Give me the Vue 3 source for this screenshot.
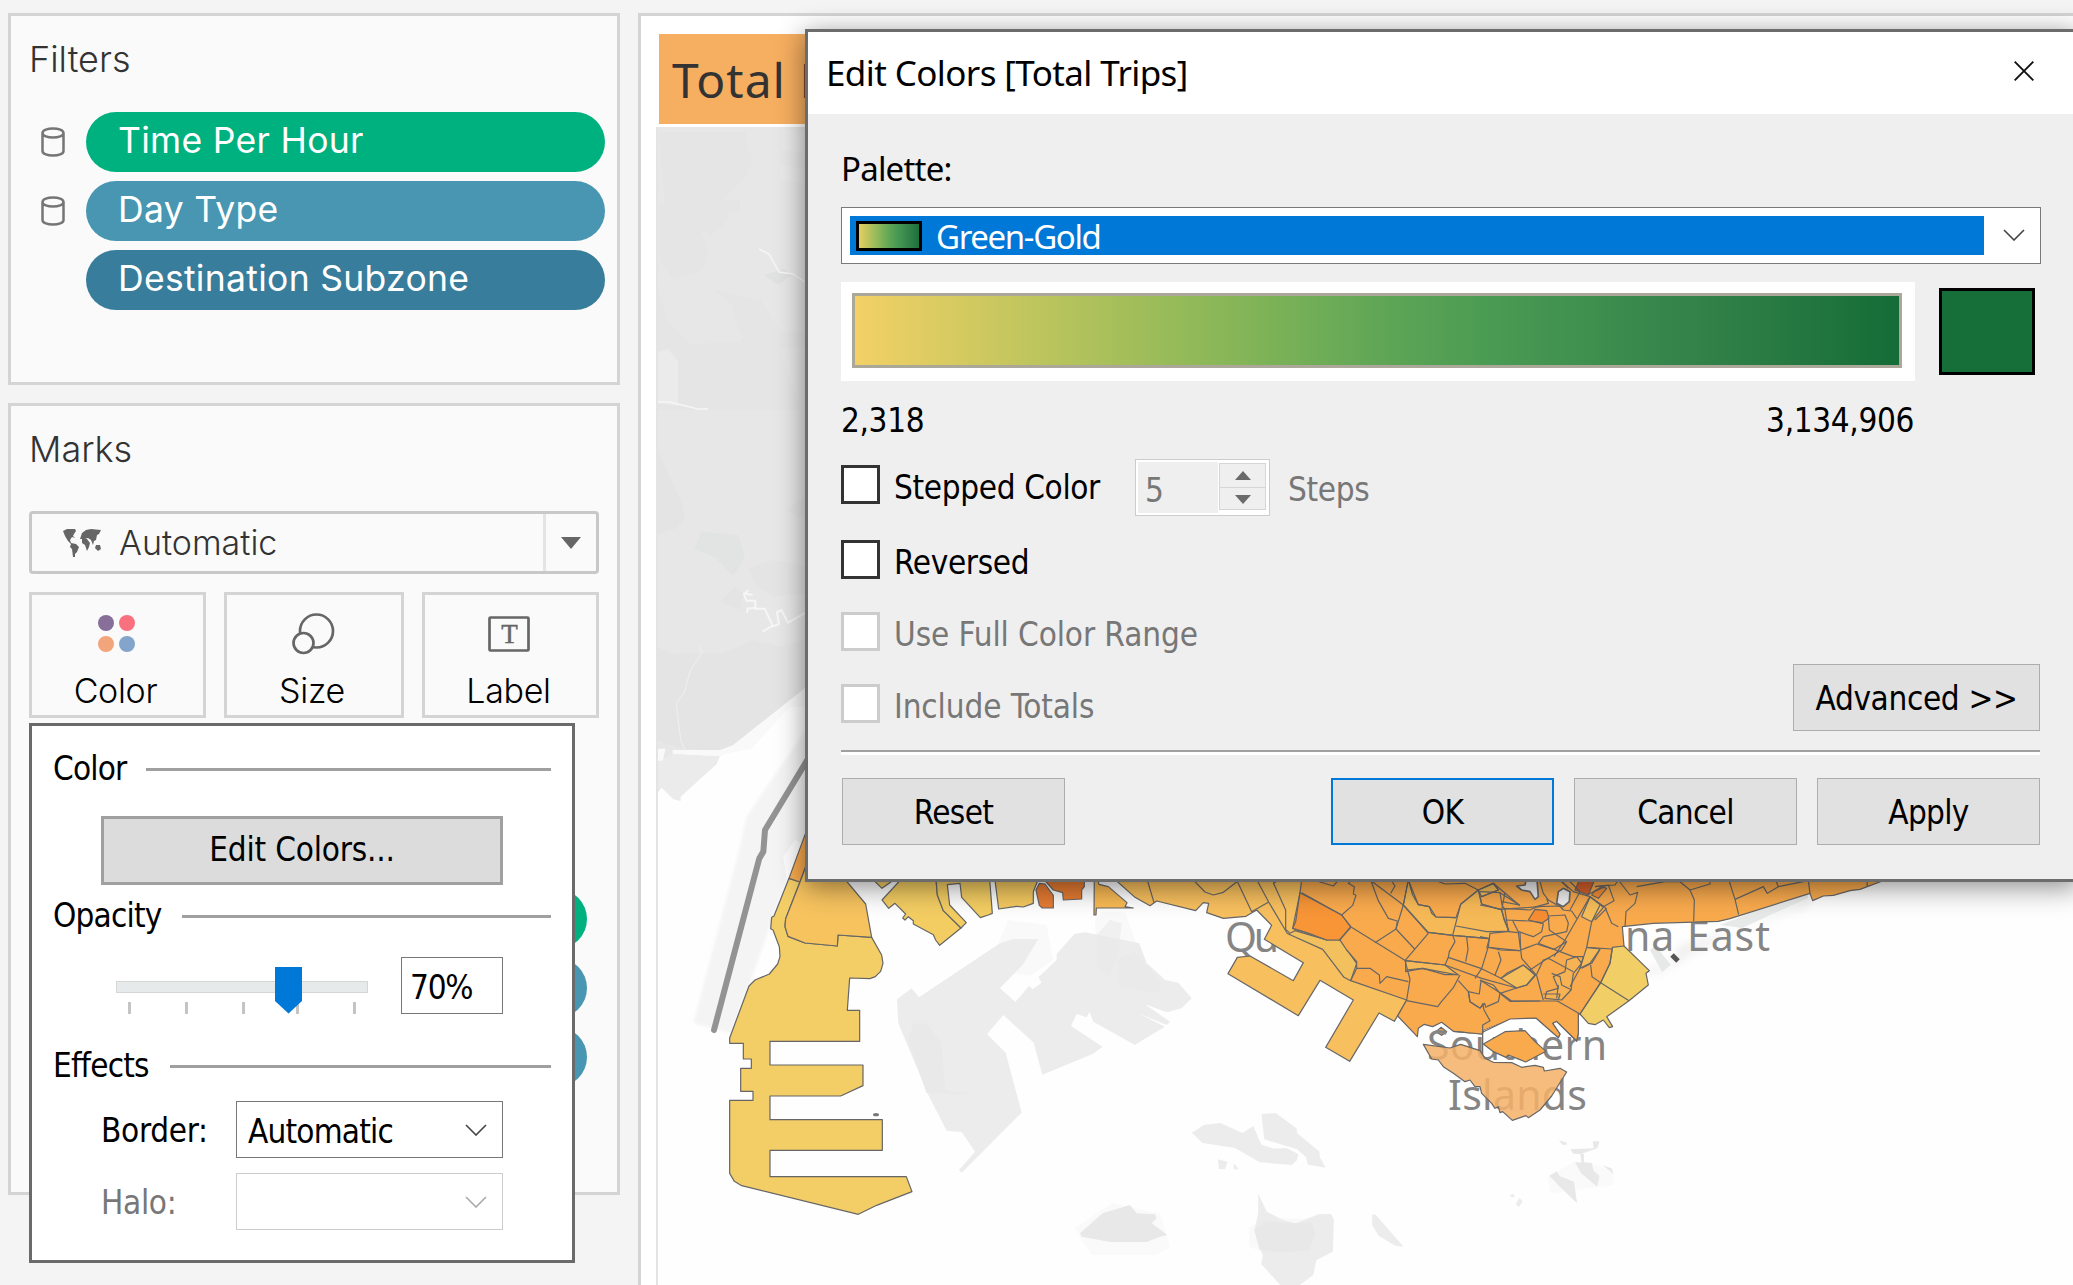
<script setup>
import { ref } from 'vue'

const filters = [
  { name: 'Time Per Hour', tone: 'green', context: true },
  { name: 'Day Type', tone: 'blue', context: true },
  { name: 'Destination Subzone', tone: 'deep', context: false },
]
const ticks = [128, 185, 242, 296, 353]
const steps = ref(5)
const opacity = ref('70%')

const checks = [
  { name: 'Stepped Color', cls: 'stepped', off: false },
  { name: 'Reversed', cls: 'reversed', off: false },
  { name: 'Use Full Color Range', cls: 'full', off: true },
  { name: 'Include Totals', cls: 'totals', off: true },
]

// Subzone borders of the central region
const westLines = [
  '22,60 42,128', '155,55 195,96 220,105 250,97 290,66', '290,60 335,155 386,126', '348,55 386,126 443,222',
  '400,68 437,150 437,208 448,218', '400,70 425,55', '485,98 605,165 632,200 797,302', '520,60 580,78 600,55',
  '640,55 625,70 643,80 640,102 648,106 638,136 605,165', '690,55 715,122 745,175 772,183 768,207 705,248',
  '690,60 790,135 865,220', '750,55 765,78 752,100', '805,60 790,135 768,207 824,267', '805,60 818,105 835,134 868,140 875,160 888,171 948,173',
  '598,240 632,203', '865,220 795,302', '865,217 940,226 1048,236', '795,302 915,315 1025,355 1130,384',
  '797,330 848,325 915,344 950,344', '795,302 810,358 800,420', '650,325 690,325 718,345 720,370 740,350 805,365',
  '800,422 893,440 905,424 940,383 960,345', '915,315 925,292 1025,326 1083,355', '948,198 1040,215 1107,214',
  '1015,90 962,133 938,226 945,245 928,275 925,292', '980,230 984,268 977,305', '1048,236 1045,260 1025,326 1005,355',
  '1045,262 1138,272', '1075,275 1083,300 1065,345', '1015,88 1025,132 1080,148 1200,140', '870,55 915,72 975,70 1015,90 1060,70 1075,90 1025,110',
  '1095,98 1085,150 1093,180 1107,215', '1060,70 1140,137', '955,362 985,395 990,425 1020,445 1034,430 1050,482 1028,495 1028,580',
  '985,395 1018,402 1023,362 1060,375 1080,400 1075,425 1040,440', '1080,400 1110,424 1200,423', '1083,355 1100,340 1150,315 1185,345 1160,375 1130,384 1080,400',
]
const eastLines = [
  '66,135 75,150 85,215', '70,145 150,150 170,140 205,130 200,115', '75,180 150,183 180,187 190,192 185,215 160,230 115,215 97,180',
  '0,230 28,236 20,265', '28,262 62,270 120,272', '120,215 122,270 125,295 170,347', '85,215 115,218 122,270 170,252 222,268 260,245',
  '205,170 208,210 260,245 245,270 195,300 150,330', '165,140 240,138 250,150 275,153 290,175', '205,168 255,165 265,190 260,215 190,230',
  '180,65 190,100 205,120 240,140', '240,60 280,95 330,110 375,142 395,190 415,200', '265,60 300,95 270,150', '330,110 255,240 222,290',
  '360,135 335,185 320,262 395,267', '345,80 385,75 402,122 370,140', '320,105 375,80', '345,180 380,145', '190,230 175,250 222,268 280,290 310,290 300,325 270,380',
  '170,347 190,420', '168,347 190,300 205,295 280,335', '215,340 240,350 245,375 275,390', '235,375 230,415', '190,402 240,402 235,420',
  '305,325 335,310 360,268', '332,315 336,350 362,368', '397,265 390,310 362,368 300,462', '95,423 232,423 300,462',
  '415,60 450,105 473,97 465,130 438,155 435,200', '470,80 555,65 600,65 630,90 643,120 641,184', '630,90 690,72 690,55',
  '745,55 765,118 776,164', '765,118 850,80 862,100 895,80 985,62', '885,55 895,80', '985,62 990,100', '1160,55 1162,78',
  '415,60 405,75 345,80', '200,60 240,60 265,85', '0,360 60,398 95,423', '0,95 60,98 66,135', '0,135 66,148', '60,98 118,135 66,125',
]
</script>

<template>
  <div class="workspace">
    <aside class="sidebar">
      <section class="card filters">
        <h2>Filters</h2>
        <div v-for="f in filters" :key="f.name" class="filter-row">
          <svg v-if="f.context" class="cyl" viewBox="0 0 24 30">
            <path d="M1.5 6v18c0 6 21 6 21 0V6M1.5 6c0-6 21-6 21 0s-21 6-21 0" />
          </svg>
          <span v-else class="cyl"></span>
          <span class="pill" :class="f.tone">{{ f.name }}</span>
        </div>
      </section>

      <section class="card marks">
        <h2>Marks</h2>
        <div class="mark-type">
          <svg class="world" viewBox="0 0 38 28">
            <path d="M0 2l4-2 8 0 1 2-2 3-1 2 2 2-3-1-2 3 1 3 5 1 3 3-2 5-2 2v5l-2-2-1-8-2-2 1-3-3-3-3-5zM19 4l4-3 5-1 10 1-2 4-2 1-1 5-2 1-1 4-2-5-3-2-3 1-5 0zM19 10l5 0 3 4-1 4-2 4-2-6-3-2zM33 16l4 0 1 4-3 2-3-3z" />
          </svg>
          <span>Automatic</span>
          <i class="drop"></i>
        </div>
        <div class="mark-cards">
          <div class="mark">
            <svg viewBox="0 0 60 50">
              <circle cx="19" cy="18" r="8" fill="#876f99" /><circle cx="40" cy="18" r="8" fill="#f9707f" />
              <circle cx="19" cy="39" r="8" fill="#f2a47b" /><circle cx="40" cy="39" r="8" fill="#83a4cb" />
            </svg>
            <span>Color</span>
          </div>
          <div class="mark wide">
            <svg viewBox="0 0 60 50" fill="#fafafa" stroke="#666" stroke-width="2.700">
              <circle cx="33.500" cy="26" r="16.500" /><circle cx="20.500" cy="38" r="10" />
            </svg>
            <span>Size</span>
          </div>
          <div class="mark">
            <svg viewBox="0 0 60 50" fill="none" stroke="#666" stroke-width="2.700">
              <rect x="9.500" y="12.500" width="39" height="33" rx="1" />
              <text x="29.500" y="38" text-anchor="middle" class="serif-t">T</text>
            </svg>
            <span>Label</span>
          </div>
        </div>
        <div class="shelf">
          <span class="pill green"></span>
          <span class="pill blue"></span>
          <span class="pill blue"></span>
        </div>
      </section>
    </aside>

    <main class="view">
      <div class="view-title">Total E</div>
      <svg class="map" viewBox="656 127 1417 1158" width="1417" height="1158">
        <defs>
          <filter id="soft"><feGaussianBlur stdDeviation="5" /></filter>
        </defs>
        <rect x="656" y="127" width="1417" height="1158" fill="#fefefe" />
        <!-- mainland -->
        <path d="M656 127H830V670L733 745 720 756 690 753 656 765Z" fill="#e7e7e7" />
        <g transform="translate(640 480) scale(.33333)">
          <path d="M48 845L98 822 240 828 230 852 122 950 122 963 100 958 65 923 48 945Z" fill="#ebebeb" />
          <path d="M48 500L100 522 250 520 340 480 420 500 500 480V620L280 795 245 812 130 808 48 780Z" fill="#e4e4e4" />
          <path d="M500 620L280 795 240 825 335 806 450 680 500 680Z" fill="#f9f9f9" />
          <path d="M185 155L295 165 315 232 280 287 222 230 163 208Z" fill="#e1e4e3" />
          <path d="M48 -100L130 80 135 120 110 145 48 165ZM325 265L400 240 500 260V340L400 350 350 320ZM240 365L285 320 310 340 300 390ZM435 90L500 50V120Z" fill="#e4e4e4" />
          <path d="M325 330l-13 14 8 18h26v24h28l25 53 18-7-6-35 13-7 20 38 60-34M310 340l28 5M322 398v-12l22-3M368 455l30-18" fill="none" stroke="#f6f6f6" stroke-width="6" />
          <path d="M178 500l7 20-34 50-18 68-24 32 13 110 12 27" fill="none" stroke="#f0f0f0" stroke-width="3" />
          <path d="M98 810H240L280 795 240 828 98 822ZM54 806H77L68 842H54Z" fill="#f9f9f9" />
        </g>
        <g fill="#e3e3e3">
          <path d="M659 132h86l6 30-6 15-22 22 6 20-11 10-8 7-45-30zM700 200h40v12l-40-3zM659 205l36 10 13 35-6 20-28 10-15-20zM715 290l45 10 20 30-30 20-10-20-8-25zM658 292l10 30 22 22 50-2 10-14 55 5v12l-25 5 20 60H658z" opacity=".5" />
          <path d="M781 128l24 5v20l-24-3zM780 165l25 4v15l-25-4z" fill="#e9e9e9" />
          <path d="M764 275l20-6 8 6-14 10z" fill="#dfe2e1" />
          <path d="M658 352l10-3 10 12v45l-20-3z" fill="#ebebeb" />
        </g>
        <path d="M759 249l10 5 10 18 14 2 12 8M658 402h12l28 7h10" fill="none" stroke="#f6f6f6" stroke-width="1.500" />

        <!-- islands and causeway -->
        <g transform="translate(640 780) scale(.33333)">
          <path d="M160 730L300 200 320 110 400 -10 505 -160V150L445 290 390 440 330 610 275 760Z" fill="#f4f4f4" filter="url(#soft)" />
          <path d="M430 230L465 180 483 190 440 300Z" fill="#fdfdfd" />
          <path d="M520 -90L375 150 370 215 358 235 222 750" fill="none" stroke="#939393" stroke-width="18" stroke-linecap="round" stroke-linejoin="round" />
          <path d="M1075 490L1105 420 1220 435 1240 540 1170 588 1085 575ZM1365 420L1385 395 1455 395 1500 520 1410 590 1372 560Z" fill="#f9f9f9" />
          <path d="M771 658L815 625 837 652 1080 490 1120 477H1195L1150 552 1080 625 1126 666 1167 618 1178 628 1205 608 1195 592 1250 540V522L1303 462 1335 457 1440 478 1498 490 1520 550 1560 585 1575 600 1615 608 1655 655 1625 685 1580 697 1515 673 1590 725 1580 735 1495 700 1575 740 1500 785 1485 795 1360 725 1348 695 1340 712 1310 702 1293 738 1388 800 1358 822 1207 884 1181 788 1090 705 1041 762 1097 818 1145 998 965 1178 957 1170 1005 1115 965 1056 920 1052 865 945 775 730Z" fill="#ececec" />
          <path d="M820 730H858L903 785 917 930 1000 942 860 940 805 780Z" fill="#e9e9e9" />
          <path d="M1370 465L1410 420 1445 430 1435 520 1410 590 1370 560ZM1430 540L1485 515 1560 600V640L1440 620Z" fill="#e9e9e9" opacity=".6" />
          <path d="M1303 1345L1415 1270 1560 1300 1590 1400 1550 1425H1355Z" fill="#fafafa" />
          <path d="M1320 1360L1388 1300 1470 1275 1490 1300 1545 1303 1550 1315 1535 1330 1582 1365 1560 1370 1520 1386 1410 1386 1325 1370Z" fill="#e8e8e8" />
          <ellipse cx="708" cy="1004" rx="9" ry="5" fill="#777" />
        </g>
        <g transform="translate(1140 1080) scale(.35714 .33333)" fill="#ececec">
          <path d="M145 158L180 134 225 129 287 159 317 138 340 194 375 206 410 204 443 222 440 240 425 255 335 247 266 204 175 189ZM340 102L380 99 438 145 440 160 503 215 503 230 520 263 470 254 465 232 440 208 348 178ZM218 238L245 245 238 268 221 267ZM262 250L277 268 263 268Z" />
          <path d="M306 440L370 414 465 416 490 460 475 515 370 525 306 500Z" fill="#f9f9f9" />
          <path d="M331 341L355 395 400 420 435 430 500 403 535 402 543 420 540 515 494 540 485 585 448 615H393L339 552 344 528 320 452 331 400Z" />
          <path d="M350 424L435 430 480 425 490 460 475 510 390 518 335 510 320 450Z" fill="#e8e8e8" />
          <path d="M650 404H660L738 500 715 497 668 467 650 435ZM1036 345l8-3 6 6-8 5zM1062 354l10 10-11 17-9-8z" />
          <path d="M1142 290L1215 245 1265 250 1325 275V315L1150 340Z" fill="#fafafa" />
          <path d="M1146 287L1167 274 1175 288 1215 305 1224 370 1180 325ZM1218 247L1236 248 1233 222H1243V247L1265 249 1270 272 1287 288 1280 320 1235 280ZM1295 256L1320 265 1327 282ZM1205 208L1270 205 1268 184H1287L1280 205 1235 222 1213 221ZM1173 181L1195 188V194H1183Z" fill="#e8e8e8" />
        </g>

        <path d="M1635 975L1655 967 1675 965 1690 955 1800 900 1810 896 1810 905 1740 930 1680 945 1665 970 1660 973Z" fill="#efefef" filter="url(#soft)" />
        <path d="M1720 925L1808 890V898L1742 928ZM1650 950L1662 972 1671 965 1655 945Z" fill="#e7e9e8" />
        <path d="M1672 955L1678 961" stroke="#555" stroke-width="5" />
        <g class="places">
          <text x="1225" y="952" textLength="54" lengthAdjust="spacing">Qu</text>
          <text x="1625" y="951" textLength="145" lengthAdjust="spacing">na East</text>
          <text x="1448" y="1110" textLength="139" lengthAdjust="spacing">Islands</text>
        </g>

        <!-- western subzones -->
        <g class="zones" transform="translate(640 780) scale(.33333)">
          <path fill="#f3cd66" d="M447 295L402 408 395 412 392 446 399 450 418 500 420 530 413 552 388 582 345 600 327 618 269 774V790H310V837H334V865H302V934H339V961H269V1180L283 1204 305 1217 655 1303 710 1276 816 1235 799 1190H390V1111H727V1019H390V948H602L669 917V855H390V784H659V691H622L629 594 690 596 706 590 722 574 729 550 725 525 695 472 594 465 592 498 495 489 444 469 435 440 437 416 480 306Z" />
          <path fill="#f7a94d" d="M515 110L447 295 480 306 515 210Z" />
          <path fill="#f7c35f" d="M505 240L480 306 437 416 435 440 444 469 495 489 592 498 594 465 695 472 677 372 600 280Z" />
          <path fill="#f3cd62" d="M680 280L726 325 790 280Z" />
          <path fill="#f3cd62" d="M800 280L726 360 746 385 765 370 797 402 788 414 795 420 805 410 820 422 820 432 880 464 887 480 899 496 963 444 910 392 892 345 887 285Z" />
          <path fill="#f3cd62" d="M887 285L892 345 910 392 963 444 979 428 929 375 922 314 960 310 965 352 1021 413 1045 405 1057 400 1048 285Z" />
          <path fill="#f3c85f" d="M1063 285L1076 387 1130 379 1150 381 1180 370V335L1190 310 1200 285Z" />
          <path fill="#e57b32" d="M1188 330L1198 310 1215 312 1240 346V384H1207L1198 376ZM1200 285L1240 330 1268 338 1270 360 1325 357V330L1333 320V285Z" />
          <path fill="#f8b954" d="M1363 285L1362 405H1368L1369 384H1480L1455 380 1461 368 1405 320 1377 313 1370 285Z" />
        </g>

        <!-- central subzones -->
        <g class="zones" transform="translate(1140 860) scale(.33333)">
          <path fill="#f7bf5e" d="M-90 45L-15 112 30 137 50 123 167 152 190 128 206 130 200 158 250 175 318 169 350 150 395 196 373 238 490 308 460 362 330 288 292 292 264 341 475 467 540 361 640 420 557 562 629 604 717 459 763 484 800 420 650 310 600 40Z" />
          <path fill="#f2c05c" d="M445 222L465 212 560 240 600 240 650 310 632 362 612 352 548 268Z" />
          <path fill="#f9aa4d" d="M487 45L480 98 458 205 500 218 560 240 568 234 600 240 620 270 650 305 650 325 632 362 800 420 773 468 832 530 835 505 853 493 878 500 905 487 940 514 1025 522 1030 510 1110 477 1188 474 1255 533 1260 522 1238 490 1250 484 1310 543 1315 520V462L1320 462 1400 400 1452 258 1447 200 1540 190 1735 184 1770 176 2010 100 2018 122 2050 108 2080 106 2130 92 2160 88 2235 60V45Z" />
          <path fill="#f79537" d="M480 98L605 165 632 200 600 240 560 240 500 218 458 205 467 185Z" />
          <path fill="#f6b957" d="M805 60L790 135 865 217 938 226 1048 236 1050 220 1107 214 1093 180 1085 150 1025 132 1015 90 962 133 948 173 888 171 868 140 835 134Z" />
          <path fill="#f6b957" d="M797 302L915 315 955 345 848 325 797 335Z" />
          <path fill="#f6be5a" d="M1083 355L1150 315 1187 345 1160 375 1130 384ZM1015 90L1060 70 1075 90 1025 110Z" />
          <path fill="#f68d32" d="M1165 180L1185 148 1220 152 1227 175 1205 190Z" />
          <path fill="#d6602b" d="M1325 45L1305 90 1345 105 1370 45Z" />
          <path fill="#f68d32" d="M1355 105L1365 92 1385 80 1400 85 1375 115Z" />
          <path fill="#f6be5a" d="M1325 170L1350 110 1390 142 1355 185Z" />
          <path fill="#f7b353" d="M1240 350L1275 335 1280 300 1310 290 1325 310 1300 340 1293 390 1265 420 1215 415 1220 395 1255 385Z" />
          <path fill="#f6b957" d="M1320 325L1340 262 1380 267 1350 310Z" />
          <path fill="#eee" stroke-width="5" d="M1160 52L1155 75 1130 78 1145 90 1170 95 1185 118 1195 110 1190 45ZM1255 95L1270 85 1290 95 1288 125 1270 140 1250 130Z" />
          <polyline v-for="(l, i) in westLines" :key="i" :points="l" />
          <path fill="#f9aa4d" d="M888 515L903 502 920 515 905 526Z" />
          <path fill="#fff" d="M1028 522L1110 477H1188L1250 540 1220 580 1200 620 1140 622 1050 605 1028 585Z" stroke="none" />
        </g>
        <g class="zones" transform="translate(1480 860) scale(.33333)">
          <path fill="#f2ce67" d="M397 262L432 258 508 332 498 340 505 375 447 422 380 470 398 500 388 503 370 480 345 494 325 490 300 462 362 368 390 310Z" />
          <polyline points="362,368 447,422" />
          <polyline v-for="(l, i) in eastLines" :key="i" :points="l" />
        </g>
        <g class="places">
          <text x="1427" y="1060" textLength="180" lengthAdjust="spacing">Southern</text>
        </g>
        <g class="zones" transform="translate(1480 860) scale(.33333)">
          <path fill="#f9aa4d" d="M10 552L75 515 135 512 165 545 198 574 137 606 118 598 85 585 78 592 40 575Z" />
          <path fill="#f9aa4d" stroke="none" d="M-40 440L295 462 295 520 290 543 230 484 218 490 240 522 235 533 168 474 90 477 9 510 5 522-40 520Z" />
          <polyline points="-80,514 5,522 9,516 90,477 168,474 235,533 240,522 218,490 230,484 290,543 295,520 295,460" />
          <polyline points="8,430 12,450 30,482 8,495 8,590" />
          <polyline points="-35,395 -30,425 0,445 10,430" />
          <path fill="#f5b168" fill-opacity=".86" d="M-170 553L-90 564-58 553 0 572 15 595 40 607 95 608 125 622 165 616 190 622 193 633 240 625 260 636 215 708 180 750 145 773 138 767 97 781 68 755 60 758 55 740 45 745 35 730 5 700 0 680-15 680-30 660-45 665-80 640-110 620-125 600-145 597Z" />
        </g>
        <rect x="656" y="127" width="2" height="1158" fill="#e4e4e4" />
      </svg>
    </main>

    <div class="popup">
      <div class="group"><span class="g1">Color</span><hr /></div>
      <button class="edit"><span>Edit Colors...</span></button>
      <div class="group second"><span class="g2">Opacity</span><hr /></div>
      <div class="opacity-row">
        <svg class="slider" width="252" height="57" viewBox="116 957 252 57">
          <rect x="116.500" y="981.500" width="251" height="11" fill="#e7eaea" stroke="#d6d6d6" />
          <rect v-for="t in ticks" :key="t" :x="t" y="1002" width="3" height="12" fill="#c4c4c4" />
          <path d="M275 967H302V1001L288.500 1013.500 275 1001Z" fill="#0078d7" />
        </svg>
        <div class="num">{{ opacity }}</div>
      </div>
      <div class="group third"><span class="g3">Effects</span><hr /></div>
      <div class="field">
        <label>Border:</label>
        <div class="combo"><span>Automatic</span><svg viewBox="0 0 22 12"><path d="M1 1l10 10L21 1" /></svg></div>
      </div>
      <div class="field off">
        <label>Halo:</label>
        <div class="combo"><span></span><svg viewBox="0 0 22 12"><path d="M1 1l10 10L21 1" /></svg></div>
      </div>
    </div>

    <div class="dialog">
      <header>
        <span>Edit Colors [Total Trips]</span>
        <svg width="20" height="20" viewBox="0 0 20 20"><path d="M.7.700L19.300 19.300M19.300.700L.7 19.300" stroke="#111" stroke-width="1.900" /></svg>
      </header>
      <div class="body">
        <div class="plabel">Palette:</div>
        <div class="palette">
          <div class="chosen"><i class="mini ramp"></i><span>Green-Gold</span></div>
          <svg viewBox="0 0 22 12"><path d="M1 1l10 10L21 1" /></svg>
        </div>
        <div class="ramp-row">
          <div class="ramp-box"><div class="ramp"></div></div>
          <div class="swatch"></div>
        </div>
        <div class="range"><span>2,318</span><span>3,134,906</span></div>
        <div class="checks">
          <div v-for="c in checks" :key="c.name" class="check" :class="[c.cls, { off: c.off }]">
            <i></i><span>{{ c.name }}</span>
            <template v-if="c.cls === 'stepped'">
              <div class="spin">
                <b>{{ steps }}</b>
                <div class="arrows"><em><u class="up"></u></em><em><u class="down"></u></em></div>
              </div>
              <span class="steps">Steps</span>
            </template>
          </div>
          <button class="adv"><span>Advanced &gt;&gt;</span></button>
        </div>
        <div class="rule"></div>
        <div class="actions">
          <button class="reset"><span>Reset</span></button>
          <button class="ok"><span>OK</span></button>
          <button><span>Cancel</span></button>
          <button><span>Apply</span></button>
        </div>
      </div>
    </div>
  </div>
</template>

<style>
body { margin: 0; overflow: hidden; }
</style>

<style scoped>
* { box-sizing: border-box; }
.workspace {
  position: relative; display: flex; width: 2073px; height: 1285px; overflow: hidden;
  background: #f4f4f4; font-family: Inter, sans-serif; white-space: nowrap;
}
.sidebar { width: 638px; padding: 13px 18px 0 8px; display: flex; flex-direction: column; gap: 18px; flex: none; }
.card { border: 3px solid #d4d4d4; background: #fafafa; width: 612px; }
.filters { height: 372px; padding: 21px 12px 0 18px; }
.marks { height: 792px; padding: 21px 18px 0 18px; }
h2 { margin: 0; font-size: 36px; font-weight: 300; line-height: 44px; color: #333; }
.filters h2 { margin-bottom: 31px; }
.filter-row { display: flex; align-items: center; gap: 21px; padding-left: 12px; margin-bottom: 9px; }
.cyl { width: 24px; height: 30px; flex: none; fill: none; stroke: #757575; stroke-width: 2.5; }
.pill { width: 519px; height: 60px; border-radius: 30px; padding-left: 32px; color: #fff; font-size: 35.5px; line-height: 58px; letter-spacing: .3px; flex: none; }
.green { background: #00b180; }
.blue { background: #4996b2; }
.deep { background: #387d9c; }
.mark-type {
  display: flex; align-items: center; height: 63px; margin-top: 40px; border: 3px solid #c8c8c8; border-radius: 4px;
  padding-left: 31px; font-size: 34px; font-weight: 300; color: #333;
}
.world { width: 38px; height: 28px; fill: #666; margin-right: 18px; }
.drop { margin-left: auto; width: 53px; height: 57px; border-left: 3px solid #e4e4e4; display: flex; align-items: center; justify-content: center; }
.drop::after { content: ''; border: 10px solid transparent; border-top: 12px solid #666; border-bottom: 0; }
.mark-cards { display: flex; gap: 18px; margin-top: 18px; }
.mark { width: 177px; height: 126px; border: 3px solid #d4d4d4; display: flex; flex-direction: column; align-items: center; font-size: 34px; font-weight: 300; color: #000; }
.mark.wide { width: 180px; }
.mark svg { width: 60px; height: 50px; margin-top: 10px; margin-right: 2px; }
.mark span { line-height: 40px; margin-top: 16px; margin-right: 4px; letter-spacing: -.3px; }
.serif-t { font-family: "Liberation Serif", serif; font-size: 27px; fill: #666; stroke: #666; stroke-width: .5; }
.shelf { display: flex; flex-direction: column; gap: 9px; margin-top: 171px; width: 558px; align-items: flex-end; }

.view { flex: 1; border: solid #d4d4d4; border-width: 3px 0 0 3px; background: #fff; margin-top: 13px; padding: 18px 0 0 15px; min-width: 0; }
.view-title { height: 90px; margin-left: 3px; margin-bottom: 3px; background: #f6ae60; color: #333; font: 48px/92px "Noto Sans", sans-serif; padding-left: 13px; letter-spacing: 1px; }
.map { display: block; }
.places { font: 41px "Noto Sans", sans-serif; fill: #858585; }
.zones { stroke: #666; stroke-width: 3.6; stroke-linejoin: round; }
.zones polyline { fill: none; }

.popup {
  position: absolute; left: 29px; top: 723px; width: 546px; height: 540px; border: 3px solid #6a6a6a; background: #fff;
  padding: 22px 21px 0 21px; color: #000;
}
.popup, .body { font-family: "DejaVu Sans Condensed", "DejaVu Sans", sans-serif; font-stretch: condensed; font-size: 33px; letter-spacing: -.35px; }
.popup { letter-spacing: -.8px; }
.group { display: flex; align-items: center; height: 42px; }
.group span { line-height: 42px; flex: none; }
.group hr { flex: 1; border: 0; height: 3px; background: #a0a0a0; margin: 0; }
.g1 { width: 93px; } .g2 { width: 129px; } .g3 { width: 117px; }
button { font: inherit; letter-spacing: inherit; color: #000; padding: 0; }
.edit { display: block; width: 402px; height: 69px; margin: 26px 0 10px 48px; border: 3px solid #a0a0a0; background: #dcdcdc; letter-spacing: -.2px; padding: 0 0 2px; }
.opacity-row { display: flex; gap: 33px; margin: 20px 0 31px 63px; }
.num { width: 102px; height: 57px; border: 1px solid #777; padding-left: 8px; line-height: 59px; letter-spacing: -1.2px; }
.field { display: flex; align-items: center; height: 57px; margin: 15px 0 0 48px; }
.third + .field { margin-top: 14px; }
.field label { width: 135px; line-height: 57px; padding-top: 2px; letter-spacing: -.3px; }
.combo { width: 267px; height: 57px; border: 1px solid #777; display: flex; align-items: center; justify-content: space-between; padding: 3px 15px 0 11px; }
.combo svg, .palette svg { width: 22px; height: 12px; fill: none; stroke: #444; stroke-width: 1.6; margin-top: -2px; }
.off { color: #777; }
.field.off .combo { border-color: #ccc; }
.field.off svg { stroke: #aaa; }

.dialog {
  position: absolute; left: 805px; top: 29px; width: 1274px; height: 853px; border: 3px solid #6b6c6b; background: #efefef;
  box-shadow: 0 5px 26px rgba(0, 0, 0, .46);
}
.dialog header { display: flex; justify-content: space-between; height: 82px; background: #fff; padding: 29px 42px 0 18px; font: 35px/24px "Noto Sans", sans-serif; letter-spacing: -.6px; color: #000; }
.body { padding: 33px 0 0 33px; width: 1232px; color: #000; }
.plabel { height: 60px; line-height: 44px; font-family: "Noto Sans", sans-serif; font-size: 33px; letter-spacing: -.8px; }
.palette { display: flex; align-items: center; width: 1200px; height: 57px; border: 1px solid #7a7a7a; background: #fff; padding: 0 15px 0 8px; justify-content: space-between; }
.chosen { width: 1134px; height: 39px; background: #0078d7; color: #fff; display: flex; align-items: center; font-family: "Noto Sans", sans-serif; font-size: 33px; letter-spacing: -1.35px; line-height: 39px; padding-left: 6px; }
.chosen span { padding-top: 2px; }
.ramp { background: linear-gradient(90deg, #f4d166, #d5ca60, #b6c35c, #98bb59, #7cb257, #60a656, #4b9c53, #3f8f4f, #33834a, #257740, #146c36); }
.mini { width: 66px; height: 30px; border: 3px solid #000; background-origin: border-box; margin-right: 14px; }
.ramp-row { display: flex; gap: 24px; margin-top: 18px; height: 99px; }
.ramp-box { width: 1074px; background: #fff; padding: 11px 13px 13px 11px; }
.ramp-box .ramp { height: 75px; border: 3px solid #aca899; background-origin: border-box; }
.swatch { width: 96px; height: 87px; margin-top: 6px; border: 3px solid #000; background: #166f39; }
.range { display: flex; justify-content: space-between; width: 1073px; height: 78px; line-height: 78px; padding-top: 1px; }
.checks { position: relative; height: 291px; }
.check { display: flex; align-items: flex-start; height: 72px; padding-top: 6px; }
.check.stepped { height: 75px; }
.check i { width: 39px; height: 39px; border: 3px solid #333; background: #fff; flex: none; margin-right: 14px; }
.check.off i { border-color: #ccc; }
.check span { line-height: 46px; }
.check.stepped > i + span { width: 206px; }
.check.full span, .check.totals span { letter-spacing: -.1px; }
.spin { display: flex; width: 135px; height: 57px; margin: -6px 0 0 35px; border: 1px solid #ccc; background: #fff; padding: 2px; }
.spin b { width: 81px; height: 51px; background: #efefef; font-weight: 400; color: #777; line-height: 57px; padding-left: 7px; }
.arrows { width: 47px; height: 47px; margin: 1px; border: 1px solid #d6d6d6; background: #efefef; }
.arrows em { display: flex; height: 23px; align-items: center; justify-content: center; }
.arrows em + em { border-top: 1px solid #d6d6d6; }
.up { border: 8px solid transparent; border-bottom: 9px solid #6a6a6a; border-top: 0; }
.down { border: 8px solid transparent; border-top: 9px solid #6a6a6a; border-bottom: 0; }
.check .steps { color: #777; margin-left: 18px; line-height: 50px; }
.adv { position: absolute; left: 952px; top: 205px; width: 247px; height: 67px; }
.body button { border: 1px solid #adadad; background: #e1e1e1; padding-top: 2px; }
.rule { width: 1199px; height: 5px; border-top: 2px solid #a0a0a0; background: #fff; }
.actions { display: flex; gap: 20px; margin: 23px 0 0 1px; }
.actions button { width: 223px; height: 67px; letter-spacing: -.7px; }
.actions .reset { margin-right: 246px; }
.body .actions .ok { border: 2px solid #0078d7; }
</style>
